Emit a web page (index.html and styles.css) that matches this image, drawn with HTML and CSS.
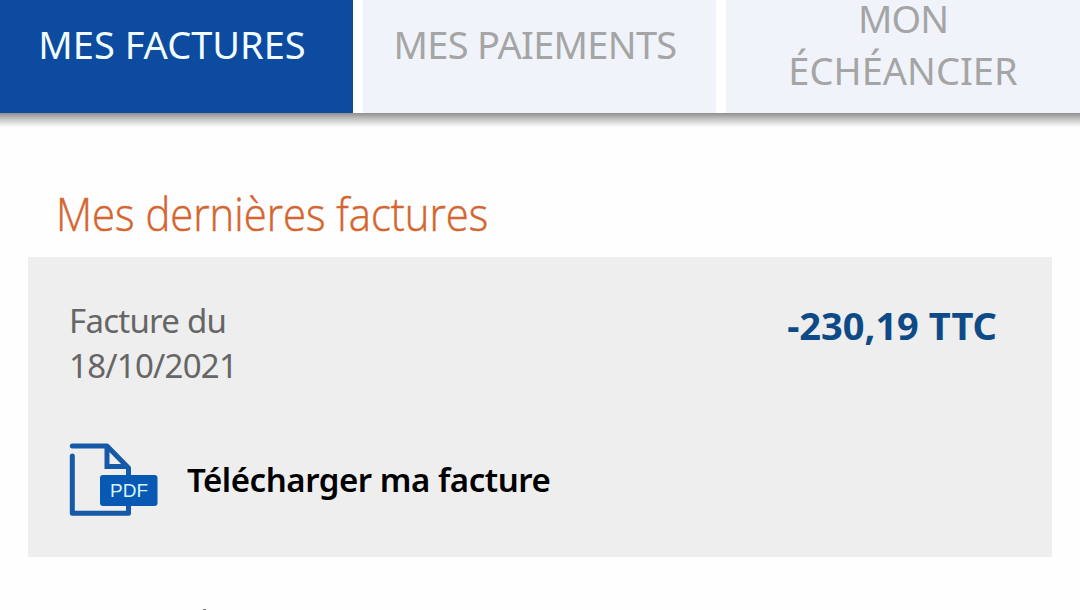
FILE: index.html
```html
<!DOCTYPE html>
<html lang="fr">
<head>
    <meta charset="UTF-8">
    <meta name="viewport" content="width=device-width, initial-scale=1.0">
    <title>Mes factures</title>
    <link rel="stylesheet" href="styles.css">
</head>
<body>
    <nav class="tabs">
        <a class="tab tab-factures active">MES FACTURES</a>
        <a class="tab tab-paiements">MES PAIEMENTS</a>
        <a class="tab tab-echeancier"><span class="line-one">MON</span><span>ÉCHÉANCIER</span></a>
    </nav>

    <main class="content">
        <h1><span>Mes dernières factures</span></h1>

        <section class="invoice">
            <div class="invoice-header">
                <div class="invoice-date">Facture du<br>18/10/2021</div>
                <div class="invoice-amount">-230,19 TTC</div>
            </div>
            <a class="download">
                <svg class="pdf-icon" width="90" height="74" viewBox="0 0 90 74">
                    <path d="M3.3 4H38L59.500 26V71.200H3.300V14" fill="none" stroke="#1559a8" stroke-width="5" stroke-linecap="round" stroke-linejoin="round"/>
                    <path d="M38 4V24.500H58" fill="none" stroke="#1559a8" stroke-width="5"/>
                    <rect x="31" y="33" width="57.500" height="31" rx="3" fill="#0759b3"/>
                    <text x="60" y="55" text-anchor="middle" textLength="38">PDF</text>
                </svg>
                <span class="download-label">Télécharger ma facture</span>
            </a>
        </section>

        <div class="next-section"></div>
    </main>
</body>
</html>
```

FILE: styles.css
```css
body {
    margin: 0;
    height: 610px;
    overflow: hidden;
    background: #fefefe;
    font-family: 'Noto Sans', 'Open Sans', sans-serif;
}
.tabs {
    display: flex;
    gap: 10px;
    height: 113px;
    background: #ffffff;
}
.tab {
    display: flex;
    flex-direction: column;
    align-items: center;
    box-sizing: border-box;
    height: 113px;
    padding-top: 18px;
    background: #f0f4fa;
    color: #a5a5a5;
    font-size: 38px;
    line-height: 52px;
    white-space: nowrap;
}
.tab-factures {
    width: 353px;
    padding-right: 9px;
}
.tab-paiements {
    width: 353px;
    padding-right: 9px;
    letter-spacing: -0.7px;
}
.tab-echeancier {
    flex: 1;
    padding-top: 0;
}
.line-one {
    margin-bottom: 8px;
    line-height: 36px;
    letter-spacing: -1px;
}
.tab.active {
    background: #0d4ba0;
    color: #f0fcff;
}
.content {
    padding: 0 28px;
    background: linear-gradient(#8f8f8f, #c4c4c4 6px, #fefefe 14px) no-repeat;
    background-size: 100% 14px;
}
h1 {
    margin: 0;
    padding: 68px 0 0 28px;
    height: 76px;
    color: #d4652f;
    font-family: 'Open Sans', 'Noto Sans', sans-serif;
    font-size: 46px;
    font-weight: 300;
    line-height: 64px;
    white-space: nowrap;
}
h1 span {
    display: inline-block;
    transform: scaleX(0.909);
    transform-origin: left;
    -webkit-text-stroke: 0.5px #d4652f;
}
.invoice {
    box-sizing: border-box;
    height: 300px;
    padding: 41px 55px 0 41px;
    background: #eeeeee;
}
.invoice-header {
    display: flex;
    justify-content: space-between;
    height: 144px;
}
.invoice-date {
    color: #666666;
    font-size: 33px;
    line-height: 45px;
    letter-spacing: -0.75px;
}
.invoice-amount {
    color: #0d4a87;
    font-size: 38px;
    font-weight: 700;
    line-height: 54px;
}
.download {
    display: flex;
    align-items: center;
    gap: 28px;
    color: #000000;
    font-size: 33px;
    font-weight: 600;
    line-height: 46px;
    letter-spacing: -0.45px;
}
.download-label {
    padding-top: 2px;
}
.pdf-icon {
    flex: none;
}
.pdf-icon text {
    fill: #d8f4ff;
    font-family: 'Liberation Sans', Arial, sans-serif;
    font-size: 19px;
    font-weight: 400;
    letter-spacing: 0;
}
.next-section {
    width: 3px;
    height: 4px;
    margin: 52px 0 0 175px;
    background: #777777;
}
```
